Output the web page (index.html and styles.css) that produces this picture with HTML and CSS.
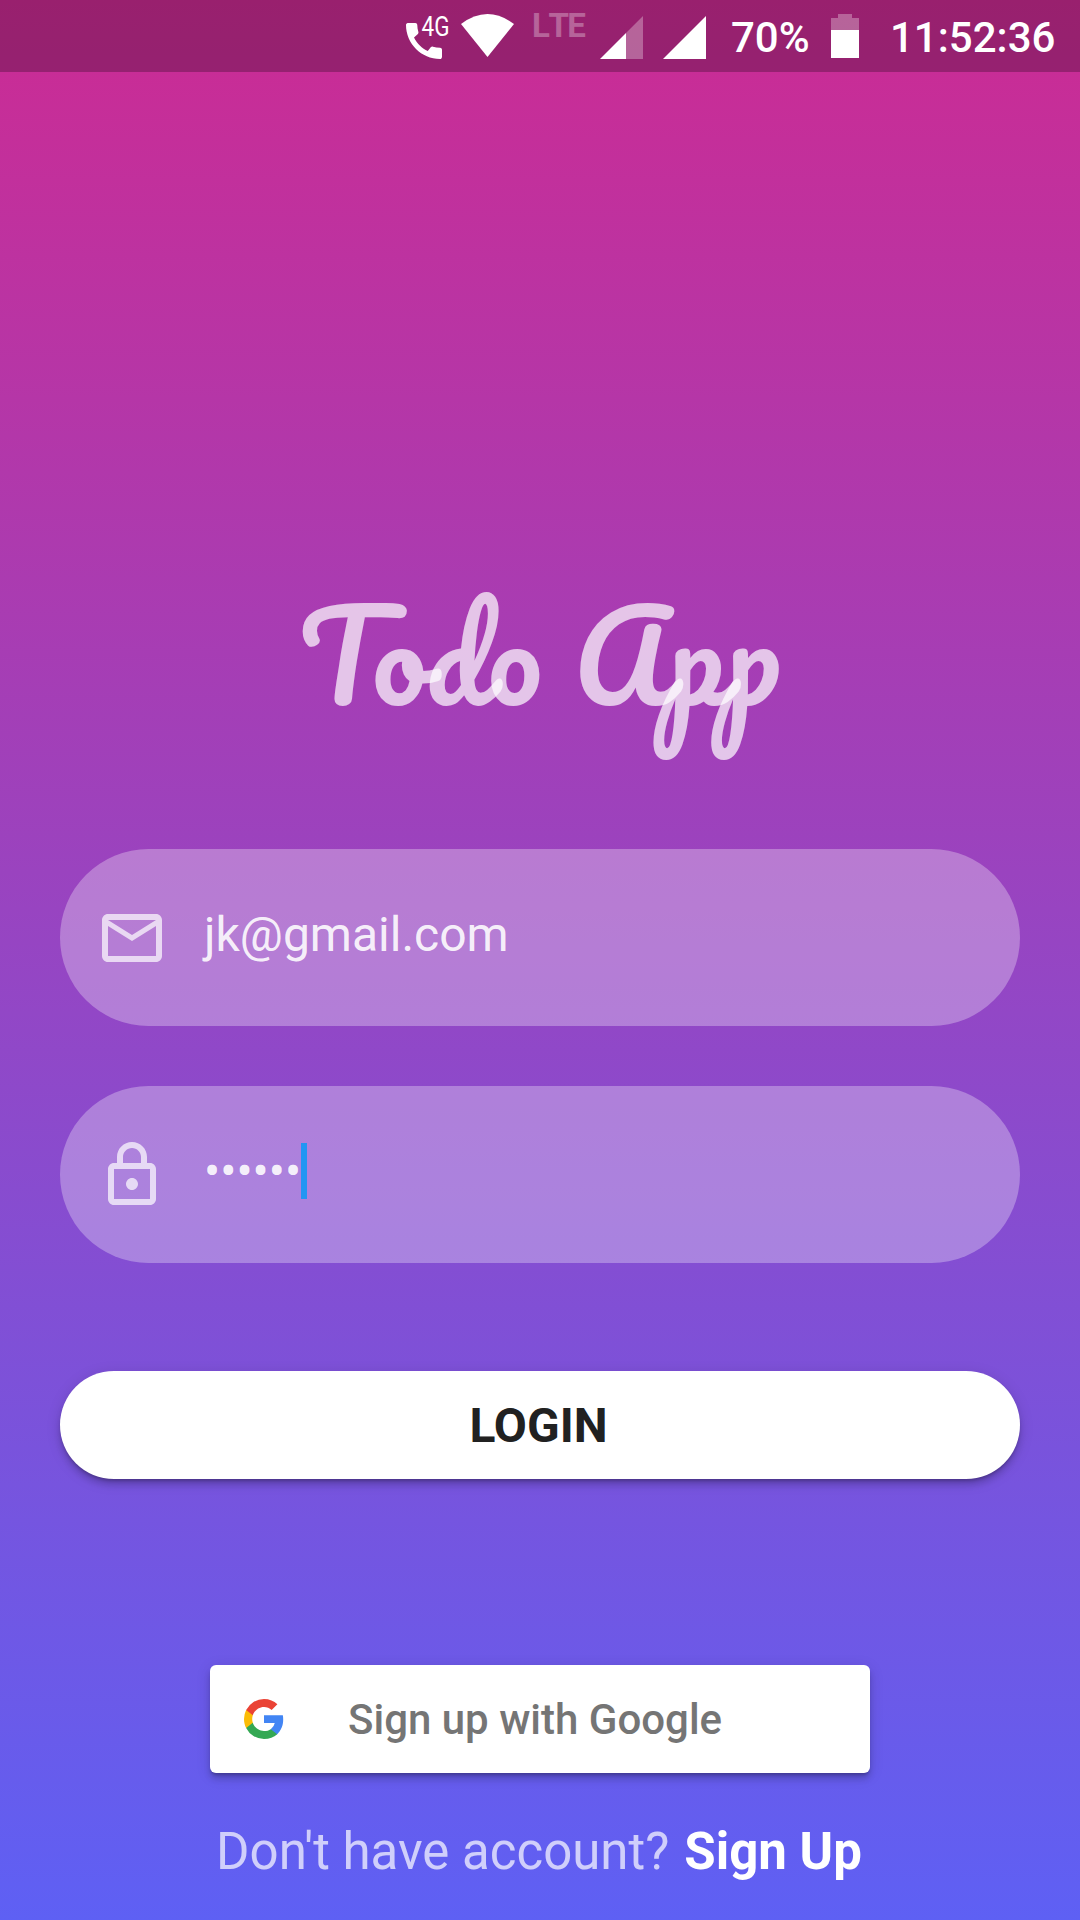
FILE: index.html
```html
<!DOCTYPE html>
<html lang="en">
<head>
<meta charset="utf-8">
<title>Todo App</title>
<link rel="stylesheet" href="styles.css">
</head>
<body>
<div class="screen">
  <header class="status">
    <svg class="call" viewBox="0 0 52 48"><path transform="scale(2)" d="M20.01 15.38c-1.23 0-2.42-.2-3.53-.56-.35-.12-.74-.03-1.01.24l-1.57 1.97c-2.83-1.35-5.48-3.9-6.89-6.83l1.95-1.66c.27-.28.35-.67.24-1.02-.37-1.11-.56-2.3-.56-3.53 0-.54-.45-.99-.99-.99H4.19C3.65 3 3 3.24 3 3.99 3 13.28 10.73 21 20.01 21c.71 0 .99-.63.99-1.18v-3.45c0-.54-.45-.99-.99-.99z"/><text x="21.500" y="19" textLength="28" lengthAdjust="spacingAndGlyphs">4G</text></svg>
    <svg class="wifi" viewBox="0 0 53 44"><path d="M0 10Q26.500-10 53 10L26.500 43Z"/></svg>
    <svg class="lte" viewBox="0 0 51 24"><text x="-2 14.500 33.200" y="23">LTE</text></svg>
    <svg class="signal" viewBox="0 0 43 43"><path class="dim" d="M26 17L43 0V43H26Z"/><path d="M0 43L26 17V43Z"/></svg>
    <svg class="signal full" viewBox="0 0 43 43"><path d="M0 43L43 0V43Z"/></svg>
    <span class="percent">70%</span>
    <svg class="battery" viewBox="0 0 28 44"><path class="dim" d="M7 0H21V4H28V16H0V4H7Z"/><path d="M0 16H28V44H0Z"/></svg>
    <time class="clock">11:52:36</time>
  </header>
  <main class="content">
    <h1 class="title">Todo App</h1>
    <form class="form">
      <div class="field">
        <svg class="icon" viewBox="0 0 24 24"><path d="M20 4H4c-1.100 0-2 .9-2 2v12c0 1.100.9 2 2 2h16c1.100 0 2-.9 2-2V6c0-1.100-.9-2-2-2zm0 14H4V8l8 5 8-5v10zm-8-7L4 6h16l-8 5z"/></svg>
        <span class="value">jk@gmail.com</span>
      </div>
      <div class="field">
        <svg class="icon" viewBox="0 0 24 24"><path fill-rule="evenodd" d="M18 8h-1V6c0-2.760-2.240-5-5-5S7 3.240 7 6v2H6c-1.100 0-2 .9-2 2v10c0 1.100.9 2 2 2h12c1.100 0 2-.9 2-2V10c0-1.100-.9-2-2-2zM9 6c0-1.660 1.340-3 3-3s3 1.340 3 3v2H9V6zM6 10h12v10H6zM12 17c1.100 0 2-.9 2-2s-.9-2-2-2-2 .9-2 2 .9 2 2 2z"/></svg>
        <span class="value">••••••</span><i class="caret"></i>
      </div>
      <button class="login" type="button">LOGIN</button>
    </form>
    <button class="google" type="button">
      <svg class="logo" viewBox="0 0 18 18"><path fill="#4285f4" d="M17.640 9.205c0-.639-.057-1.252-.164-1.841H9v3.481h4.844a4.140 4.140 0 0 1-1.796 2.716v2.259h2.908c1.702-1.567 2.684-3.875 2.684-6.615z"/><path fill="#34a853" d="M9 18c2.430 0 4.467-.806 5.956-2.180l-2.908-2.259c-.806.540-1.837.860-3.048.860-2.344 0-4.328-1.584-5.036-3.711H.957v2.332A8.997 8.997 0 0 0 9 18z"/><path fill="#fbbc05" d="M3.964 10.710A5.410 5.410 0 0 1 3.682 9c0-.593.102-1.170.282-1.710V4.958H.957A8.996 8.996 0 0 0 0 9c0 1.452.348 2.827.957 4.042l3.007-2.332z"/><path fill="#ea4335" d="M9 3.580c1.321 0 2.508.454 3.440 1.345l2.582-2.580C13.463.891 11.426 0 9 0A8.997 8.997 0 0 0 .957 4.958L3.964 7.290C4.672 5.163 6.656 3.580 9 3.580z"/></svg>
      <span>Sign up with Google</span>
    </button>
    <p class="signup"><span class="ask">Don't have account?</span><b>Sign Up</b></p>
  </main>
</div>
</body>
</html>
```
FILE: styles.css
```css
* { box-sizing: border-box; }
body { margin: 0; font-family: Roboto, sans-serif; color: #fff; }
.screen {
  width: 1080px;
  height: 1920px;
  overflow: hidden;
  display: flex;
  flex-direction: column;
  background: linear-gradient(#cc2b93, #5e60f4);
}
.status {
  height: 72px;
  flex: none;
  display: flex;
  align-items: flex-start;
  padding: 14px 0 0 400px;
  background: rgba(0, 0, 0, .25);
  font-size: 42px;
  line-height: 48px;
  font-weight: 500;
}
.status svg { flex: none; fill: #fff; overflow: visible; }
.status .dim { opacity: .3; }
.call { width: 52px; height: 48px; margin-top: 3px; font: 400 27px Roboto, sans-serif; }
.wifi { width: 53px; height: 44px; margin-left: 9px; }
.lte { width: 51px; height: 24px; margin-left: 20px; font: 700 33px Roboto, sans-serif; opacity: .3; }
.signal { width: 43px; height: 43px; margin: 2px 0 0 15px; }
.signal.full { margin-left: 20px; }
.percent { width: 78px; margin-left: 25px; }
.battery { width: 28px; height: 44px; margin-left: 22px; }
.clock { margin-left: 31px; white-space: nowrap; }
.content { flex: 1; display: flex; flex-direction: column; align-items: center; }
.title {
  margin: 492px 0 0;
  padding-right: 1px;
  height: 285px;
  font: 400 120px/180px Pacifico, cursive;
  color: rgba(255, 255, 255, .7);
  white-space: nowrap;
}
.form { width: 960px; display: flex; flex-direction: column; gap: 60px; }
.field {
  height: 177px;
  display: flex;
  align-items: center;
  padding-left: 36px;
  border-radius: 89px;
  background: rgba(255, 255, 255, .3);
}
.icon { width: 72px; height: 72px; fill: rgba(255, 255, 255, .7); }
.value { margin-left: 36px; padding-bottom: 6px; font-size: 48px; line-height: 56px; color: rgba(255, 255, 255, .9); }
.caret { width: 6px; height: 56px; margin-bottom: 7px; background: #2196f3; }
button { border: 0; background: #fff; font-family: inherit; padding: 0; box-shadow: 0 3px 3px -1px rgba(0, 0, 0, .2), 0 6px 6px rgba(0, 0, 0, .14), 0 3px 15px rgba(0, 0, 0, .12); }
.login { height: 108px; margin-top: 48px; padding-right: 3px; border-radius: 54px; color: #212121; font-size: 48px; font-weight: 700; }
.google {
  width: 660px;
  height: 108px;
  margin-top: 186px;
  padding-left: 34px;
  display: flex;
  align-items: center;
  gap: 64px;
  border-radius: 6px;
  color: #757575;
  font-size: 42px;
  font-weight: 500;
}
.logo { width: 40px; height: 40px; }
.signup { margin: 47px 0 0; padding-right: 2px; display: flex; gap: 15px; font-size: 51px; line-height: 64px; white-space: nowrap; }
.ask { color: rgba(255, 255, 255, .7); }
```
